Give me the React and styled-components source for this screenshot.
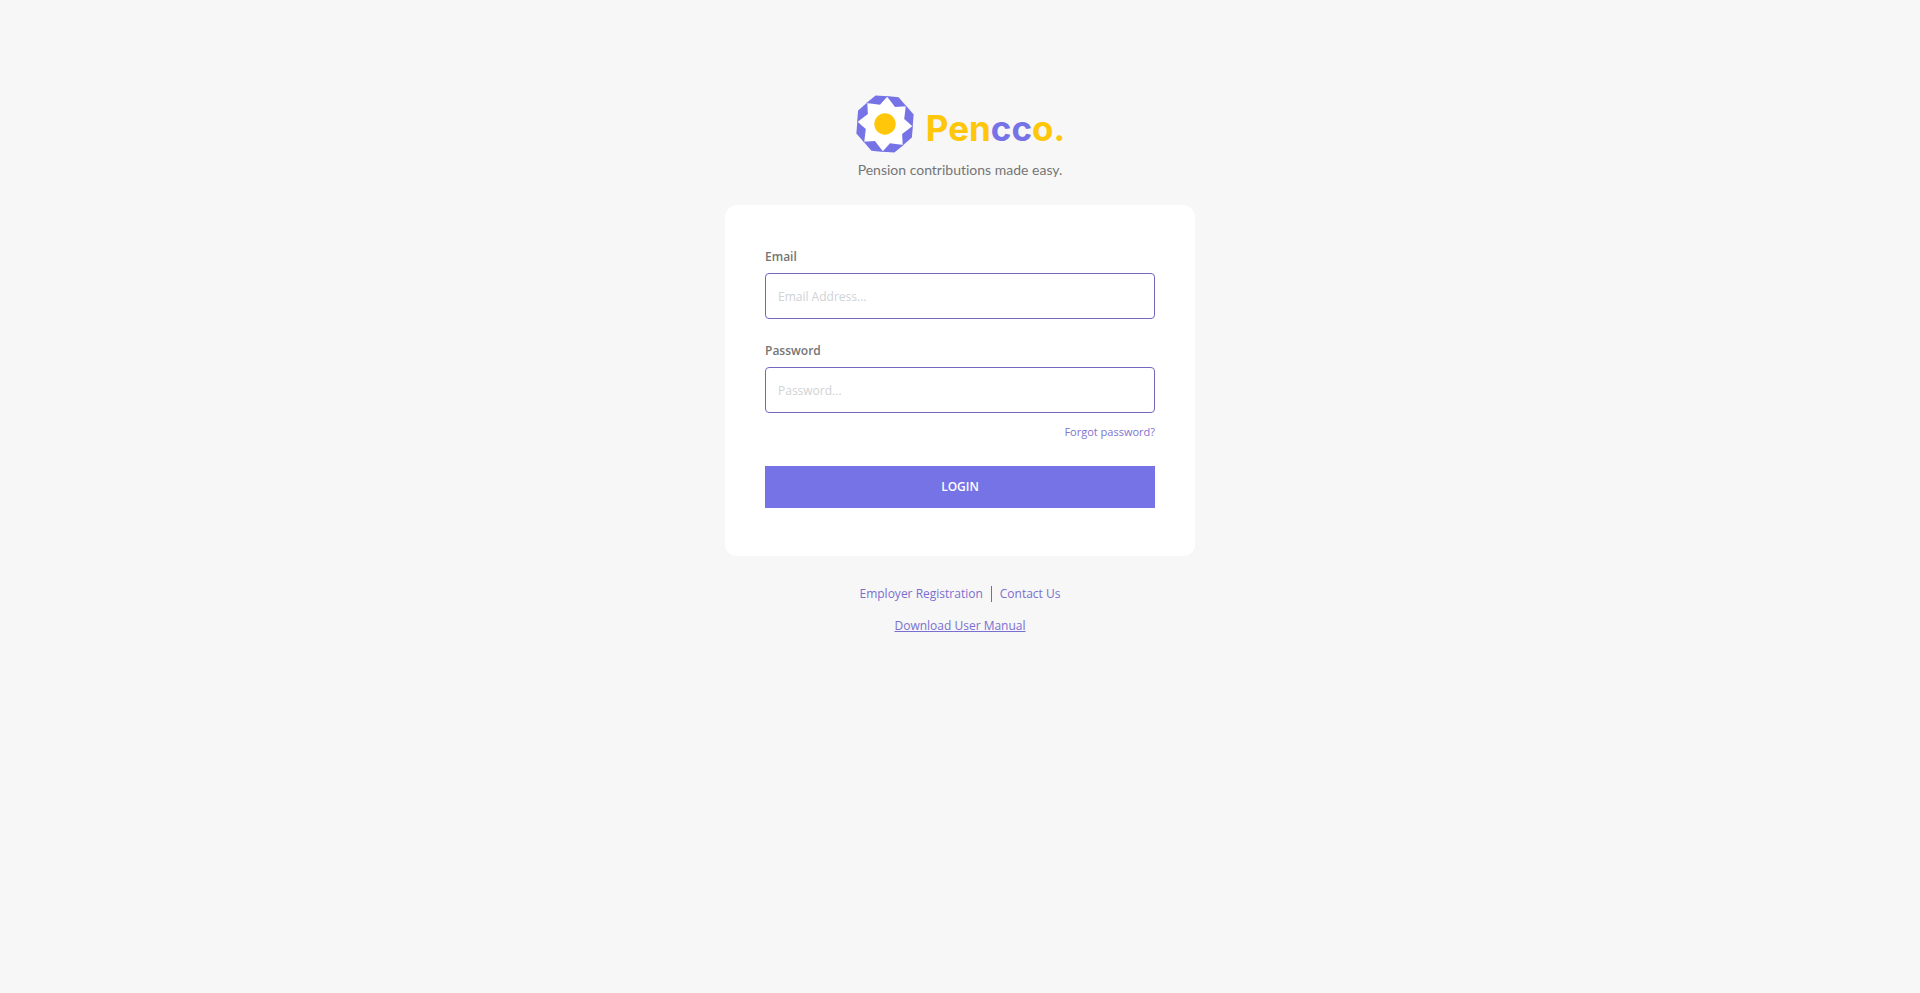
import React, { useState } from 'react'
import styled, { createGlobalStyle } from 'styled-components'

const petals=[0,45,90,135,180,225,270,315];

function Logo () {
  return (
    <LogoRow>
        <svg width="60" height="60" viewBox="-30 -30 60 60" aria-hidden="true">
            <circle r="25" fill="#fff"/>
            {petals.map((angle)=>(
                <path key={angle} d="M-18.6 -20.9L-9.4 -28.6L2.6 -27.7L-5 -19.2Z" fill="#7673e6"
                transform={`rotate(${angle})`}/>
            ))}
            <circle r="10.7" fill="#ffc60a"/>
        </svg>
        <Wordmark>Pen<span>cc</span>o.</Wordmark>
    </LogoRow>
  )
}

export default function App () {
    const [email,setEmail]=useState('');
    const [password,setPassword]=useState('');
  return (
    <Page>
        <GlobalStyle/>
        <Brand>
            <Logo/>
            <Tagline>Pension contributions made easy.</Tagline>
        </Brand>
        <Card onSubmit={(e)=>e.preventDefault()}>
            <Field>
                <Label htmlFor="email">Email</Label>
                <Input id="email" type="email" placeholder="Email Address..." value={email}
                onChange={(e)=>setEmail(e.target.value)}/>
            </Field>
            <Field>
                <Label htmlFor="password">Password</Label>
                <Input id="password" type="password" placeholder="Password..." value={password}
                onChange={(e)=>setPassword(e.target.value)}/>
            </Field>
            <Forgot href="#forgot">Forgot password?</Forgot>
            <LoginButton type="submit">LOGIN</LoginButton>
        </Card>
        <Links>
            <FooterLink href="#register">Employer Registration</FooterLink>
            <Divider/>
            <FooterLink href="#contact">Contact Us</FooterLink>
        </Links>
        <FooterLink href="#manual" $underline>Download User Manual</FooterLink>
    </Page>
  )
}

const GlobalStyle=createGlobalStyle`
    *{
        box-sizing:border-box;
    }
    body{
        margin:0;
        background-color:#f7f7f7;
        color:#757575;
        font-family:"Open Sans", sans-serif;
        font-size:12px;
        line-height:16px;
    }
`;

const Page=styled.main`
    min-height:100vh;
    display:flex;
    flex-direction:column;
    align-items:center;
    padding:94px 16px 32px;
`;

const Brand=styled.header`
    display:flex;
    flex-direction:column;
    align-items:center;
    gap:6px;
    margin-bottom:25px;
`;

const LogoRow=styled.div`
    display:flex;
    align-items:center;
    gap:11px;
    svg{
        display:block;
    }
`;

const Wordmark=styled.span`
    padding-top:8px;
    color:#ffc60a;
    font-family:Inter, sans-serif;
    font-size:35px;
    font-weight:700;
    line-height:46px;
    span{
        color:#7673e6;
    }
`;

const Tagline=styled.p`
    margin:0;
    font-family:Lato, sans-serif;
    font-size:14px;
    font-variant-ligatures:none;
    line-height:20px;
`;

const Card=styled.form`
    display:flex;
    flex-direction:column;
    width:100%;
    max-width:470px;
    padding:44px 40px 48px;
    margin-bottom:30px;
    background-color:#fff;
    border-radius:12px;
`;

const Field=styled.div`
    display:flex;
    flex-direction:column;
    gap:8px;
    & + &{
        margin-top:24px;
    }
`;

const Label=styled.label`
    font-weight:600;
`;

const Input=styled.input`
    width:100%;
    height:46px;
    padding:0 12px;
    border:1px solid #7667bd;
    border-radius:4px;
    background-color:#fff;
    color:#555;
    font:inherit;
    &::placeholder{
        color:#d0d2d4;
        opacity:1;
    }
    &:focus{
        outline:none;
        border-color:#5a56d6;
    }
`;

const Forgot=styled.a`
    align-self:flex-end;
    margin:11px 0 26px;
    color:#8074cf;
    font-size:11px;
    text-decoration:none;
`;

const LoginButton=styled.button`
    height:42px;
    border:none;
    background-color:#7673e6;
    color:#fff;
    font:inherit;
    font-weight:600;
    cursor:pointer;
`;

const Links=styled.nav`
    display:flex;
    align-items:center;
    gap:8px;
    margin-bottom:16px;
`;

const Divider=styled.span`
    width:1px;
    height:16px;
    background-color:#757575;
`;

const FooterLink=styled.a`
    color:#7a6fd0;
    text-decoration:${({$underline})=>$underline?"underline":"none"};
`;
